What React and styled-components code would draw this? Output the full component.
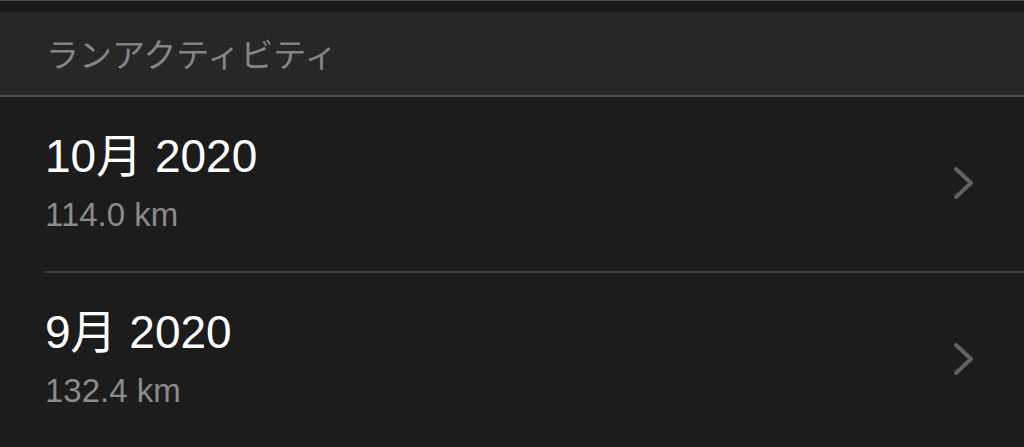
import styled, { createGlobalStyle } from 'styled-components';

const GlobalStyle = createGlobalStyle`
    html, body {
        margin: 0;
        padding: 0;
        background-color: #1c1c1c;
    }
`;

const Screen = styled.div`
    width: 1024px;
    height: 447px;
    overflow: hidden;
    background-color: #1c1c1c;
    font-family: 'Liberation Sans', 'Noto Sans CJK JP', sans-serif;
    border-top: 1px solid #4a4a4a;
    box-sizing: border-box;
`;

const TopStrip = styled.div`
    height: 11px;
    background-color: #1a1a1a;
`;

const SectionHeader = styled.div`
    display: flex;
    align-items: center;
    height: 85px;
    padding: 0 0 2px 46px;
    background-color: #272727;
    border-bottom: 2px solid #4f4f4f;
    color: #858585;
    font-family: 'Noto Sans CJK JP', sans-serif;
    font-size: 33px;
    box-sizing: border-box;
`;

const List = styled.ul`
    margin: 0;
    padding: 0 0 0 44px;
    list-style-type: none;
`;

const Row = styled.li`
    display: flex;
    height: 174px;
    padding-right: 48px;
    border-bottom: ${props => props.$last ? 'none' : '2px solid #3d3d3d'};
`;

const Texts = styled.div`
    flex: 1;
    display: flex;
    flex-direction: column;
    padding: 36px 0 0 1px;
`;

const Title = styled.div`
    color: #ffffff;
    font-size: 46px;
    line-height: 46px;
`;

const Distance = styled.div`
    margin-top: 20px;
    color: #8a8a8a;
    font-size: 33px;
    line-height: 32px;
`;

const ChevronIcon = styled.svg`
    align-self: center;
    margin-top: -2px;
`;

const Chevron = () => (
    <ChevronIcon width="24" height="36" viewBox="0 0 24 36">
        <path d="M4 4 L19 18 L4 32" fill="none" stroke="#626262" strokeWidth="4" strokeLinecap="round" strokeLinejoin="round" />
    </ChevronIcon>
);

const months = [
    { title: '10月 2020', km: '114.0 km' },
    { title: '9月 2020', km: '132.4 km' },
];

export default function App() {
    return (
        <Screen>
            <GlobalStyle />
            <TopStrip />
            <SectionHeader>ランアクティビティ</SectionHeader>
            <List>
                {months.map((m, i) => (
                    <Row key={m.title} $last={i === months.length - 1}>
                        <Texts>
                            <Title>{m.title}</Title>
                            <Distance>{m.km}</Distance>
                        </Texts>
                        <Chevron />
                    </Row>
                ))}
            </List>
        </Screen>
    );
}
